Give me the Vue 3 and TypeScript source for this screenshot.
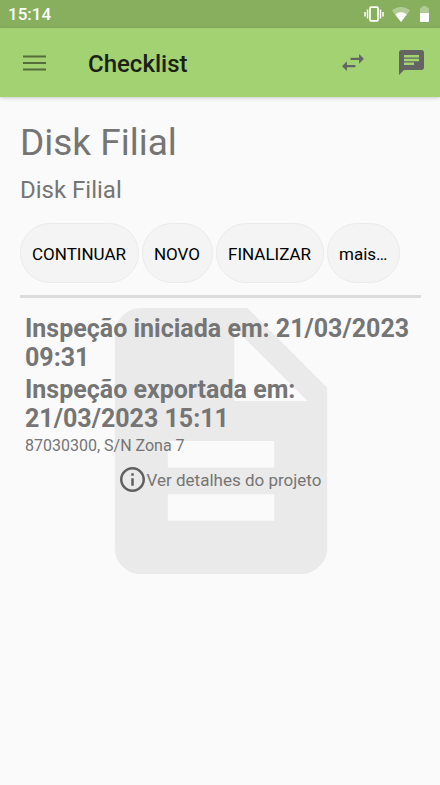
<script setup lang="ts">
interface Action {
  id: string
  label: string
}

const actions: Action[] = [
  { id: 'continue', label: 'CONTINUAR' },
  { id: 'new', label: 'NOVO' },
  { id: 'finish', label: 'FINALIZAR' },
  { id: 'more', label: 'mais…' },
]

const events: string[] = [
  'Inspeção iniciada em: 21/03/2023 09:31',
  'Inspeção exportada em: 21/03/2023 15:11',
]
</script>

<template>
  <div class="screen">
    <div class="status">
      <span class="clock">15:14</span>
      <svg class="vibrate" viewBox="0 0 20 16" aria-hidden="true">
        <rect x="6" y="1.2" width="8" height="13.6" rx="1" fill="none" stroke="#fff" stroke-width="1.7" />
        <path d="M3.5 3.5v9M16.5 3.5v9M1 6v4.500M19 6v4.500" stroke="#fff" stroke-width="1.5" />
      </svg>
      <svg class="wifi" viewBox="0 0 18 15" aria-hidden="true">
        <path d="M9 15 0 3.500C2.500 1.300 5.500 0 9 0s6.500 1.300 9 3.500z" fill="#fff" opacity=".35" />
        <path d="M9 15 3.200 7.500C4.800 6 6.800 5.300 9 5.300s4.200.7 5.800 2.200z" fill="#fff" />
      </svg>
      <svg class="battery" viewBox="0 0 9 16" aria-hidden="true">
        <path d="M0 2.500Q0 1.600 1 1.600h1.500V0h4v1.600H8q1 0 1 .9V7H0z" fill="#fff" opacity=".35" />
        <path d="M0 7h9v8q0 1-1 1H1q-1 0-1-1z" fill="#fff" />
      </svg>
    </div>

    <header class="bar">
      <button class="icon-button" type="button" aria-label="Menu">
        <svg class="menu" viewBox="0 0 24 16" aria-hidden="true">
          <path d="M0 1.200h24M0 8h24M0 14.800h24" stroke="#546d3b" stroke-width="2.300" />
        </svg>
      </button>
      <h1 class="title">Checklist</h1>
      <button class="icon-button" type="button" aria-label="Sincronizar">
        <svg class="swap" viewBox="3 5 18 14" aria-hidden="true">
          <path d="M6.990 11 3 15l3.990 4v-3H14v-2H6.990v-3zM21 9l-3.990-4v3H10v2h7.010v3L21 9z" fill="#646464" />
        </svg>
      </button>
      <button class="icon-button" type="button" aria-label="Mensagens">
        <svg class="chat" viewBox="2 2 20 20" aria-hidden="true">
          <path d="M20 2H4c-1.100 0-1.990.9-1.990 2L2 22l4-4h14c1.100 0 2-.9 2-2V4c0-1.100-.9-2-2-2zM6 9h12v2H6V9zm8 5H6v-2h8v2zm4-6H6V6h12v2z" fill="#646464" />
        </svg>
      </button>
    </header>

    <main class="content">
      <h2 class="name">Disk Filial</h2>
      <p class="unit">Disk Filial</p>
      <div class="actions">
        <button v-for="action in actions" :key="action.id" class="pill" type="button">{{ action.label }}</button>
      </div>
      <section class="details">
        <svg class="sheet" viewBox="4 2 16 20" aria-hidden="true">
          <path d="M14 2H6c-1.100 0-1.990.9-1.990 2L4 20c0 1.100.89 2 1.990 2H18c1.100 0 2-.9 2-2V8l-6-6zm2 16H8v-2h8v2zm0-4H8v-2h8v2zm-3-5V3.500L18.500 9H13z" fill="#eaeaea" />
        </svg>
        <div class="info">
          <p v-for="event in events" :key="event" class="event">{{ event }}</p>
          <p class="address">87030300, S/N Zona 7</p>
          <a class="more" href="#projeto">
            <svg class="about" viewBox="2 2 20 20" aria-hidden="true">
              <path d="M11 7h2v2h-2zm0 4h2v6h-2zm1-9C6.480 2 2 6.480 2 12s4.480 10 10 10 10-4.480 10-10S17.520 2 12 2zm0 18c-4.410 0-8-3.590-8-8s3.590-8 8-8 8 3.590 8 8-3.590 8-8 8z" fill="#606060" />
            </svg>
            <span>Ver detalhes do projeto</span>
          </a>
        </div>
      </section>
    </main>
  </div>
</template>

<style>
body {
  background: #fafafa;
}
</style>

<style scoped>
.screen {
  min-height: 100vh;
  background: #fafafa;
  color: #757575;
  font-family: Roboto, "Liberation Sans", sans-serif;
}

h1,
h2,
p {
  margin: 0;
}

svg {
  display: block;
}

button {
  border: 0;
  background: none;
  font-family: inherit;
}

.status {
  display: flex;
  align-items: center;
  height: 28px;
  padding: 0 11px 0 8px;
  background: #88af5d;
}

.clock {
  flex: 1;
  color: #fff;
  font-size: 17px;
  font-weight: 500;
  line-height: 28px;
}

.vibrate {
  width: 20px;
  height: 16px;
  margin-right: 8px;
}

.wifi {
  width: 18px;
  height: 15px;
  margin-right: 10px;
}

.battery {
  width: 9px;
  height: 16px;
}

.bar {
  display: flex;
  align-items: center;
  height: 69px;
  padding: 0 10px 0 17px;
  background: #a2d272;
  box-shadow: 0 1px 4px rgba(0, 0, 0, 0.2);
}

.icon-button {
  padding: 6px;
}

.menu {
  width: 23px;
  height: 16px;
}

.title {
  flex: 1;
  margin-left: 36px;
  color: #1a2112;
  font-size: 24px;
  font-weight: 500;
  line-height: 34px;
  padding-top: 2px;
}

.swap {
  width: 22px;
  height: 17px;
  margin-right: 23px;
}

.chat {
  width: 25px;
  height: 25px;
}

.content {
  padding: 24px 19px 20px 20px;
}

.name {
  font-size: 37px;
  font-weight: 400;
  line-height: 44px;
}

.unit {
  margin-top: 10px;
  font-size: 24px;
  line-height: 30px;
}

.actions {
  display: flex;
  gap: 3px;
  margin-top: 18px;
}

.pill {
  height: 60px;
  padding: 2px 12px 0 11px;
  border: 1px solid #ebebeb;
  border-radius: 30px;
  background: #f4f4f4;
  color: #000;
  font-size: 17px;
  white-space: nowrap;
}

.details {
  position: relative;
  margin-top: 12px;
  padding: 16px 5px 80px;
  border-top: 3px solid #dcdcdc;
}

.sheet {
  position: absolute;
  top: 10px;
  left: 50%;
  width: 213px;
  height: 266px;
  transform: translateX(-50%);
}

.info {
  position: relative;
}

.event {
  margin-bottom: 3px;
  font-size: 25px;
  font-weight: 700;
  line-height: 29px;
}

.address {
  font-size: 16px;
  line-height: 20px;
}

.more {
  display: flex;
  align-items: center;
  justify-content: center;
  gap: 2px;
  margin-top: 11px;
  color: #757575;
  font-size: 17px;
  line-height: 24px;
  text-decoration: none;
}

.about {
  width: 25px;
  height: 25px;
}
</style>
